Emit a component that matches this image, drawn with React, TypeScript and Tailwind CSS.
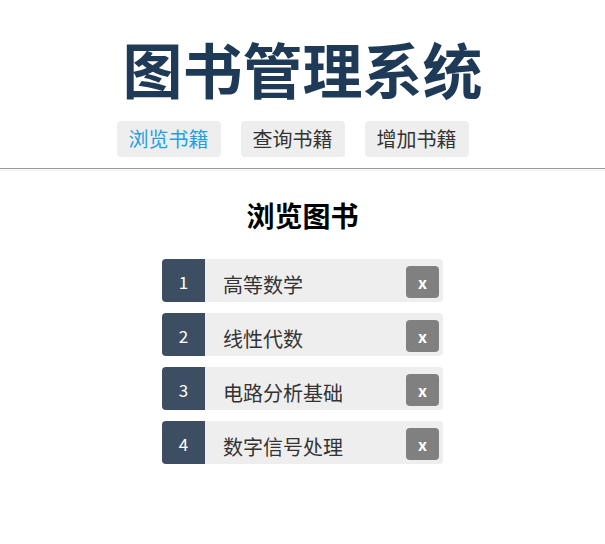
const books = ["高等数学", "线性代数", "电路分析基础", "数字信号处理"];

const navItems = ["浏览书籍", "查询书籍", "增加书籍"];

export default function App() {
  return (
    <div className="min-h-[544px] bg-white font-['Noto_Sans_CJK_SC','Microsoft_YaHei',sans-serif] text-[#333]">
      <header className="pt-[32px] text-center">
        <h1 className="text-[60px] leading-[72px] font-bold text-[#1f3a57]">图书管理系统</h1>
        <nav className="mt-[17px] flex justify-center">
          {navItems.map((item, i) => (
            <a
              key={item}
              className={`mr-5 flex h-9 w-[104px] items-center justify-center rounded-[4px] bg-[#eeeeee] text-[20px] ${
                i === 0 ? "text-[#1ea0e6]" : "text-[#333]"
              }`}
            >
              {item}
            </a>
          ))}
        </nav>
      </header>
      <div className="mt-[11px] h-[3px] border-t border-b border-t-[#999] border-b-[#eee]" />
      <main className="pt-[26px]">
        <h2 className="text-center text-[28px] leading-[36px] font-bold text-black">浏览图书</h2>
        <ul className="mx-auto mt-[26px] flex w-[281px] flex-col gap-[11px]">
          {books.map((name, i) => (
            <li key={name} className="flex h-[43px] items-center overflow-hidden rounded-[4px] bg-[#eeeeee]">
              <span className="flex h-full w-[43px] items-center justify-center bg-[#3d4e62] pt-[3px] text-[17px] text-white">
                {i + 1}
              </span>
              <span className="flex-1 pt-[9px] pl-[18px] text-[20px] text-[#333]">{name}</span>
              <button className="mr-1 mt-[3px] flex h-8 w-[33px] items-center justify-center rounded-[4px] bg-[#808080] text-[16px] font-bold text-white">
                x
              </button>
            </li>
          ))}
        </ul>
      </main>
    </div>
  );
}
